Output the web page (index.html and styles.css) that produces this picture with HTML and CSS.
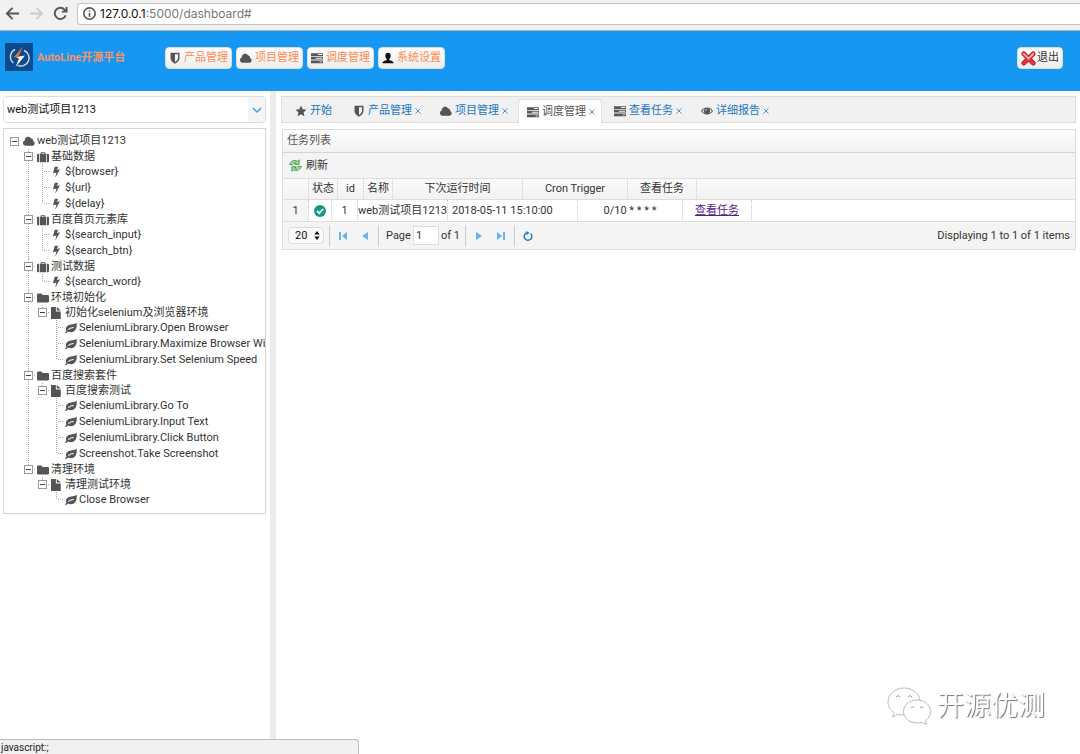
FILE: index.html
```html
<!DOCTYPE html>
<html lang="zh-CN">
<head>
<meta charset="utf-8">
<title>AutoLine开源平台</title>
<link rel="stylesheet" href="styles.css">
</head>
<body>
<svg class="sprite" aria-hidden="true">
  <symbol id="shield" viewBox="0 0 16 16"><path fill-rule="evenodd" d="M2 1h12v7c0 4-3.500 6-6 7.500C5.500 14 2 12 2 8zM8 3v10.200c2-1.200 4-2.700 4-5.200V3z"/></symbol>
  <symbol id="cloud" viewBox="0 0 16 16"><path d="M3.500 14.200a3.600 3.600 0 0 1-1.200-7A4.600 4.600 0 0 1 11 4.800a2.600 2.600 0 0 1 2.300 3.200 3.200 3.200 0 0 1-.3 6.200z"/></symbol>
  <symbol id="tasks" viewBox="0 0 16 16"><path fill-rule="evenodd" d="M0 1.500h16v3.700H0zM9.500 2.700V4H15V2.700zM0 6.400h16v3.700H0zM6.500 7.600v1.300H15V7.600zM0 11.300h16V15H0zM11.500 12.500v1.300H15v-1.300z"/></symbol>
  <symbol id="user" viewBox="0 0 16 16"><path d="M8 1c2.300 0 3.600 1.700 3.600 3.900 0 1.800-.7 3.200-1.800 4V11c2.700.6 5.700 1.300 5.700 4H.5c0-2.700 3-3.400 5.700-4V8.900c-1.100-.8-1.800-2.200-1.800-4C4.400 2.700 5.700 1 8 1z"/></symbol>
  <symbol id="star" viewBox="0 0 16 16"><path d="M8 .8l2.200 4.800 5.200.6-3.900 3.500 1.100 5.200L8 12.300l-4.600 2.600 1.100-5.200L.6 6.200l5.200-.6z"/></symbol>
  <symbol id="eye" viewBox="0 0 16 16"><path fill-rule="evenodd" d="M0 8c1.800-3 4.600-4.700 8-4.700S14.200 5 16 8c-1.800 3-4.600 4.700-8 4.700S1.800 11 0 8zm1.500 0c1 1.500 2.300 2.500 3.800 3.100A4.300 4.300 0 0 1 5 5C3.500 5.600 2.400 6.600 1.500 8zM11 5a4.300 4.300 0 0 1-.3 6.100c1.500-.6 2.800-1.600 3.800-3.100-.9-1.400-2-2.400-3.500-3zM7.900 5.200A2.300 2.300 0 0 0 5.700 7.500h1c0-.8.500-1.300 1.200-1.300z"/></symbol>
  <symbol id="case" viewBox="0 0 16 16"><path fill-rule="evenodd" d="M5 3.500V1.500h6v2h1.200V15H3.800V3.500zM6.200 3.500h3.600v-.9H6.200zM2.800 3.500V15H1.500A1.500 1.500 0 0 1 0 13.500V5a1.500 1.500 0 0 1 1.500-1.500zM13.200 3.500h1.300A1.500 1.500 0 0 1 16 5v8.500a1.500 1.500 0 0 1-1.500 1.500h-1.300z"/></symbol>
  <symbol id="bolt" viewBox="0 0 16 16"><path d="M5 1h4.500L7.800 5.300 12 4.400 5.600 15.500l1.600-7L2.500 9.600z"/></symbol>
  <symbol id="folder" viewBox="0 0 16 16"><path d="M0 3.500A1.500 1.500 0 0 1 1.500 2h4A1.500 1.500 0 0 1 7 3.500V4h7.500A1.500 1.500 0 0 1 16 5.500v7a1.500 1.500 0 0 1-1.500 1.500h-13A1.500 1.500 0 0 1 0 12.500z"/></symbol>
  <symbol id="file" viewBox="0 0 16 16"><path d="M0 0h6.500v6H13v10H0zM7.700 0L13 4.800H7.700z"/></symbol>
  <symbol id="leaf" viewBox="0 0 16 16"><path fill-rule="evenodd" d="M15.500 1C16.500 8 13.500 13.500 8 13.600c-1.800 0-3.200-.5-4.200-.9L1.200 15 0 14l1.800-2.300C0 7.500 2.800 3.600 8 3.300 11 3 13.500 2.500 15.500 1zM11.600 6.600C8.400 6.500 5.700 7.700 4 9.800l1 .9c1.700-1.800 3.800-2.700 6.600-2.800z"/></symbol>
  <symbol id="refresh" viewBox="0 0 16 16"><path fill="#a9dfa4" stroke="#2f8b3a" d="M1 7c0-4 6-6.500 9.500-4.200L12.500 1v5.500H7L9 4.800C7 4 5 4.500 4.500 7zM15 9c0 4-6 6.500-9.500 4.200L3.500 15V9.500H9l-2 1.700c2 .8 4 .3 4.500-2.200z"/></symbol>
</svg>

<div class="browser">
  <button class="nav" aria-label="后退"><svg viewBox="0 0 16 16"><path d="M15 8H2M8 2L2 8l6 6"/></svg></button>
  <button class="nav off" aria-label="前进" disabled><svg viewBox="0 0 16 16"><path d="M1 8h13M8 2l6 6-6 6"/></svg></button>
  <button class="nav" aria-label="重新加载"><svg viewBox="0 0 16 16"><path d="M13.500 10A6 6 0 1 1 12.300 3.800L14 5.500M14.500 1v5h-5"/></svg></button>
  <div class="address">
    <svg viewBox="0 0 16 16"><circle cx="8" cy="8" r="7"/><path d="M8 7v5M8 4v1.600"/></svg>
    <span><b>127.0.0.1</b>:5000/dashboard#</span>
  </div>
</div>

<header class="top">
  <svg class="logo" viewBox="0 0 28 28"><rect width="28" height="28" fill="#0b4a8c"/><path d="M10 6.500A8 8 0 0 0 8.500 20M19 7.500A8 8 0 0 1 13 22.500" fill="none" stroke="#c9d9ea" stroke-width="1.500"/><path d="M18 3.500L8.500 14.500l5-.8z" fill="#ee6a3c"/><path d="M13.500 13.700l-2.500 1 3 .6-3.500 9L20 12.500l-4.500.7z" fill="#fff"/></svg>
  <strong class="brand">AutoLine开源平台</strong>
  <nav class="menu">
    <button class="btn"><svg class="ico"><use href="#shield"/></svg>产品管理</button>
    <button class="btn"><svg class="ico"><use href="#cloud"/></svg>项目管理</button>
    <button class="btn"><svg class="ico"><use href="#tasks"/></svg>调度管理</button>
    <button class="btn"><svg class="ico black"><use href="#user"/></svg>系统设置</button>
  </nav>
  <button class="btn exit"><svg viewBox="0 0 16 16"><path d="M3 3l10 10M13 3L3 13" stroke="#b3131b" stroke-width="5" stroke-linecap="round"/><path d="M3 3l10 10M13 3L3 13" stroke="#e8323a" stroke-width="3.500" stroke-linecap="round"/><path d="M3 3l5 5 5-5" fill="none" stroke="#f9b5b8" stroke-width="1.800" stroke-linecap="round"/></svg>退出</button>
</header>

<div class="work">
  <aside class="side">
    <div class="combo">
      <input type="text" value="web测试项目1213" aria-label="项目">
      <button aria-label="展开"><svg viewBox="0 0 10 6"><path d="M1 1l4 4 4-4"/></svg></button>
    </div>
    <ul class="tree">
      <li>
        <div class="row root"><button class="fold" aria-label="折叠"></button><svg class="ico"><use href="#cloud"/></svg><span>web测试项目1213</span></div>
        <ul>
          <li>
            <div class="row"><button class="fold" aria-label="折叠"></button><svg class="ico"><use href="#case"/></svg><span>基础数据</span></div>
            <ul>
              <li class="leaf"><svg class="ico"><use href="#bolt"/></svg><span>${browser}</span></li>
              <li class="leaf"><svg class="ico"><use href="#bolt"/></svg><span>${url}</span></li>
              <li class="leaf"><svg class="ico"><use href="#bolt"/></svg><span>${delay}</span></li>
            </ul>
          </li>
          <li>
            <div class="row"><button class="fold" aria-label="折叠"></button><svg class="ico"><use href="#case"/></svg><span>百度首页元素库</span></div>
            <ul>
              <li class="leaf"><svg class="ico"><use href="#bolt"/></svg><span>${search_input}</span></li>
              <li class="leaf"><svg class="ico"><use href="#bolt"/></svg><span>${search_btn}</span></li>
            </ul>
          </li>
          <li>
            <div class="row"><button class="fold" aria-label="折叠"></button><svg class="ico"><use href="#case"/></svg><span>测试数据</span></div>
            <ul>
              <li class="leaf"><svg class="ico"><use href="#bolt"/></svg><span>${search_word}</span></li>
            </ul>
          </li>
          <li>
            <div class="row"><button class="fold" aria-label="折叠"></button><svg class="ico"><use href="#folder"/></svg><span>环境初始化</span></div>
            <ul>
              <li>
                <div class="row"><button class="fold" aria-label="折叠"></button><svg class="ico"><use href="#file"/></svg><span>初始化selenium及浏览器环境</span></div>
                <ul>
                  <li class="leaf"><svg class="ico"><use href="#leaf"/></svg><span>SeleniumLibrary.Open Browser</span></li>
                  <li class="leaf"><svg class="ico"><use href="#leaf"/></svg><span>SeleniumLibrary.Maximize Browser Window</span></li>
                  <li class="leaf"><svg class="ico"><use href="#leaf"/></svg><span>SeleniumLibrary.Set Selenium Speed</span></li>
                </ul>
              </li>
            </ul>
          </li>
          <li>
            <div class="row"><button class="fold" aria-label="折叠"></button><svg class="ico"><use href="#folder"/></svg><span>百度搜索套件</span></div>
            <ul>
              <li>
                <div class="row"><button class="fold" aria-label="折叠"></button><svg class="ico"><use href="#file"/></svg><span>百度搜索测试</span></div>
                <ul>
                  <li class="leaf"><svg class="ico"><use href="#leaf"/></svg><span>SeleniumLibrary.Go To</span></li>
                  <li class="leaf"><svg class="ico"><use href="#leaf"/></svg><span>SeleniumLibrary.Input Text</span></li>
                  <li class="leaf"><svg class="ico"><use href="#leaf"/></svg><span>SeleniumLibrary.Click Button</span></li>
                  <li class="leaf"><svg class="ico"><use href="#leaf"/></svg><span>Screenshot.Take Screenshot</span></li>
                </ul>
              </li>
            </ul>
          </li>
          <li>
            <div class="row"><button class="fold" aria-label="折叠"></button><svg class="ico"><use href="#folder"/></svg><span>清理环境</span></div>
            <ul>
              <li>
                <div class="row"><button class="fold" aria-label="折叠"></button><svg class="ico"><use href="#file"/></svg><span>清理测试环境</span></div>
                <ul>
                  <li class="leaf"><svg class="ico"><use href="#leaf"/></svg><span>Close Browser</span></li>
                </ul>
              </li>
            </ul>
          </li>
        </ul>
      </li>
    </ul>
  </aside>

  <main class="main">
    <div class="tabs">
      <div class="tab first"><a href="#"><svg class="ico"><use href="#star"/></svg>开始</a></div>
      <div class="tab"><a href="#"><svg class="ico"><use href="#shield"/></svg>产品管理</a><button class="close" aria-label="关闭"><svg viewBox="0 0 6 6"><path d="M.5.500l5 5M5.500.500l-5 5"/></svg></button></div>
      <div class="tab"><a href="#"><svg class="ico"><use href="#cloud"/></svg>项目管理</a><button class="close" aria-label="关闭"><svg viewBox="0 0 6 6"><path d="M.5.500l5 5M5.500.500l-5 5"/></svg></button></div>
      <div class="tab active"><a href="#"><svg class="ico"><use href="#tasks"/></svg>调度管理</a><button class="close" aria-label="关闭"><svg viewBox="0 0 6 6"><path d="M.5.500l5 5M5.500.500l-5 5"/></svg></button></div>
      <div class="tab"><a href="#"><svg class="ico"><use href="#tasks"/></svg>查看任务</a><button class="close" aria-label="关闭"><svg viewBox="0 0 6 6"><path d="M.5.500l5 5M5.500.500l-5 5"/></svg></button></div>
      <div class="tab"><a href="#"><svg class="ico"><use href="#eye"/></svg>详细报告</a><button class="close" aria-label="关闭"><svg viewBox="0 0 6 6"><path d="M.5.500l5 5M5.500.500l-5 5"/></svg></button></div>
    </div>

    <section class="panel">
      <h2 class="title">任务列表</h2>
      <div class="toolbar"><button class="reload"><svg class="ico"><use href="#refresh"/></svg>刷新</button></div>
      <table class="grid head">
        <colgroup><col class="w25"><col class="w29"><col class="w26"><col class="w29"><col class="w130"><col class="w105"><col class="w69"><col></colgroup>
        <thead><tr><th></th><th>状态</th><th>id</th><th>名称</th><th>下次运行时间</th><th>Cron Trigger</th><th>查看任务</th><th></th></tr></thead>
      </table>
      <table class="grid body">
        <colgroup><col class="w25"><col class="w23"><col class="w26"><col class="w90"><col class="w130"><col class="w105"><col class="w69"><col></colgroup>
        <tbody><tr>
          <td class="num">1</td>
          <td><svg class="ok" viewBox="0 0 12 12"><circle cx="6" cy="6" r="6" fill="#159a80"/><path d="M3 6l2.200 2.200L9.200 4" fill="none" stroke="#fff" stroke-width="1.800"/></svg></td>
          <td>1</td><td>web测试项目1213</td><td class="left">2018-05-11 15:10:00</td><td>0/10 * * * *</td><td><a href="#">查看任务</a></td><td></td>
        </tr></tbody>
      </table>
      <div class="pager">
        <span class="size"><select aria-label="每页条数"><option>20</option></select><svg viewBox="0 0 6 10"><path d="M0 4l3-4 3 4zM0 6l3 4 3-4z"/></svg></span>
        <i class="sep"></i>
        <button class="pg" aria-label="首页"><svg viewBox="0 0 10 10"><path d="M1 1h2v8H1zM9 1v8L4 5z"/></svg></button>
        <button class="pg" aria-label="上一页"><svg viewBox="0 0 10 10"><path d="M8 1v8L2 5z"/></svg></button>
        <i class="sep"></i>
        <label class="page">Page <input type="text" value="1"></label><span class="of">of 1</span>
        <i class="sep"></i>
        <button class="pg" aria-label="下一页"><svg viewBox="0 0 10 10"><path d="M2 1v8l6-4z"/></svg></button>
        <button class="pg" aria-label="末页"><svg viewBox="0 0 10 10"><path d="M7 1h2v8H7zM1 1v8l5-4z"/></svg></button>
        <i class="sep"></i>
        <button class="pg" aria-label="刷新"><svg viewBox="0 0 10 10"><path class="spin" d="M7.500 2.500A3.800 3.800 0 1 1 3.500 1.900"/><path class="deep" d="M3 0l3.500 1.800L3.500 4.200z"/></svg></button>
        <span class="info">Displaying 1 to 1 of 1 items</span>
      </div>
    </section>
  </main>
</div>

<div class="status">javascript:;</div>
<div class="mark">
  <svg viewBox="0 0 44 38"><g fill="#fff" stroke="#bbb"><path d="M17 1C8 1 1 7 1 15c0 4.500 2.200 8 6 10.500L5.500 30l5.500-2.800c2 .6 4 .8 6 .8 9 0 16-6 16-13.500S26 1 17 1z"/><path d="M30 13c-7.500 0-13.500 5-13.500 11.500S22.500 36 30 36c1.700 0 3.400-.2 5-.7l4.500 2.300-1-4c3-2.200 5-5.300 5-9C43.500 18 37.500 13 30 13z"/></g><path d="M9 10q2-3 4 0M21 10q2-3 4 0M24 21q1.500-2.500 3 0M33 21q1.500-2.500 3 0" fill="none" stroke="#999"/></svg>
  <span>开源优测</span>
</div>
</body>
</html>
```
FILE: styles.css
```css
* { box-sizing: border-box; }

body {
  margin: 0;
  min-height: 100vh;
  display: flex;
  flex-direction: column;
  background: #fff;
  color: #333;
  font: 11px/16px Roboto, "Noto Sans CJK SC", sans-serif;
}

button, input, select { font: inherit; color: inherit; margin: 0; }
button { border: 0; padding: 0; background: none; cursor: pointer; white-space: nowrap; }
ul { list-style: none; margin: 0; padding: 0; }

.sprite { display: none; }
.ico { width: 12px; height: 12px; fill: #555; flex: none; }
.black { fill: #111; }

/* browser chrome */
.browser {
  display: flex;
  align-items: center;
  height: 31px;
  padding: 0 0 3px 5px;
  gap: 9px;
  background: #f1f1f1;
  border-bottom: 1px solid #a9b4bb;
}
.nav { display: flex; }
.nav svg { width: 15px; height: 15px; fill: none; stroke: #555; stroke-width: 2; }
.nav.off svg { stroke: #ccc; }
.address {
  flex: 1;
  display: flex;
  align-items: center;
  gap: 4px;
  height: 22px;
  padding-left: 5px;
  border: 1px solid #c4c4c4;
  border-right: 0;
  border-radius: 3px 0 0 3px;
  background: #fff;
  color: #777;
  font-family: Inter, sans-serif;
  font-size: 12px;
}
.address svg { width: 13px; height: 13px; fill: none; stroke: #555; stroke-width: 2; }
.address b { font-weight: 400; color: #111; }

/* header */
.top {
  display: flex;
  align-items: center;
  height: 60px;
  padding: 0 17px 6px 5px;
  background: #1697f2;
}
.logo { width: 28px; height: 28px; margin-bottom: 2px; }
.brand { width: 128px; margin-left: 4px; color: #f5936a; }
.menu { display: flex; gap: 4px; }
.btn {
  display: flex;
  align-items: center;
  gap: 3px;
  height: 22px;
  padding: 0 3px;
  border-radius: 4px;
  border: 1px solid #ddd;
  background: linear-gradient(#fff, #ececec);
  color: #ff8a50;
}
.menu .btn { width: 67px; justify-content: center; }
.exit { margin-left: auto; gap: 1px; color: #333; }
.exit svg { width: 15px; height: 15px; }

/* work area */
.work { flex: 1; display: flex; }
.side {
  width: 276px;
  flex: none;
  padding: 5px 4px 0 3px;
  border-right: 6px solid #ececec;
}
.combo {
  display: flex;
  height: 27px;
  border: 1px solid #ddd;
  border-radius: 4px;
  overflow: hidden;
}
.combo input {
  flex: 1;
  min-width: 0;
  border: 0;
  outline: 0;
  padding: 0 3px;
  color: #111;
}
.combo button { display: grid; place-items: center; width: 17px; background: #f5f5f5; }
.combo svg { width: 10px; height: 6px; fill: none; stroke: #3fa3e6; stroke-width: 1.5; }

.tree {
  margin-top: 5px;
  padding: 4px 0 5px 4px;
  border: 1px solid #d4d4d4;
  overflow: hidden;
  white-space: nowrap;
}
.tree ul { padding-left: 14px; }
.tree ul li {
  background:
    repeating-linear-gradient(#aaa 0 1px, #fff 1px 2px) 6px 0 / 1px 100% no-repeat,
    repeating-linear-gradient(90deg, #aaa 0 1px, transparent 1px 2px) 6px 7px / 8px 1px no-repeat;
}
.tree ul li:last-child { background-size: 1px 8px, 8px 1px; }
.row, .leaf { display: flex; align-items: center; height: 15px; }
.row.root, .leaf { height: 16px; }
.leaf { padding-left: 14px; }
.tree .ico { margin: 0 2px 0 1px; }
.fold {
  width: 9px;
  height: 9px;
  margin: 0 3px 0 2px;
  border: 1px solid #999;
  background: linear-gradient(#444, #444) center / 5px 1px no-repeat #fff;
}

.main { flex: 1; min-width: 0; padding: 5px 4px 0 5px; }

/* tabs */
.tabs {
  display: flex;
  gap: 3px;
  height: 27px;
  padding: 2px 4px 0;
  background: #f1f1f1;
  border: 1px solid #ddd;
}
.tab {
  display: flex;
  align-items: center;
  gap: 3px;
  height: 24px;
  padding: 0 6px 0 8px;
  border: 1px solid transparent;
  border-radius: 4px 4px 0 0;
}
.tab.first { padding-right: 8px; }
.tab a { display: flex; align-items: center; gap: 3px; color: #2277c0; text-decoration: none; }
.tab.active { background: #fff; border-color: #ddd; border-bottom: 0; }
.tab.active a { color: #555; }
.close { display: flex; }
.close svg { width: 6px; height: 6px; stroke: #5c93c8; stroke-width: 1; }

/* data grid */
.panel { margin: 6px 0 0 1px; border: 1px solid #ddd; }
.title {
  margin: 0;
  height: 23px;
  padding: 0 4px;
  font-size: 11px;
  font-weight: 400;
  line-height: 22px;
  color: #555;
  background: linear-gradient(#fff, #f1f1f1);
  border-bottom: 1px solid #d4d4d4;
}
.toolbar { display: flex; height: 26px; padding-left: 6px; background: #f4f4f4; border-bottom: 1px solid #ddd; }
.reload { display: flex; align-items: center; gap: 4px; }
.reload .ico { width: 13px; height: 13px; }

.grid { width: 100%; table-layout: fixed; border-collapse: separate; border-spacing: 0; }
.grid th, .grid td {
  height: 21px;
  padding: 0;
  font-weight: 400;
  line-height: 16px;
  text-align: center;
  white-space: nowrap;
  border-right: 1px dotted #ccc;
  border-bottom: 1px solid #ddd;
}
.grid td { height: 22px; }
.grid th { background: linear-gradient(#fbfbfb, #f2f2f2); }
.grid th:last-child, .grid td:last-child { border-right: 0; }
.grid .left { text-align: left; padding-left: 4px; }
.grid .num { background: #f5f5f5; }
.grid a { color: #551a8b; }
.ok { display: block; width: 12px; height: 12px; margin: 0 auto; }
.w23 { width: 23px; }
.w25 { width: 26px; }
.w26 { width: 26px; }
.w29 { width: 29px; }
.w69 { width: 69px; }
.w90 { width: 90px; }
.w105 { width: 105px; }
.w130 { width: 130px; }

.pager {
  display: flex;
  align-items: center;
  height: 27px;
  padding: 0 5px;
  background: #f4f4f4;
}
.size { display: grid; width: 36px; align-items: center; }
.size > * { grid-area: 1 / 1; }
.size select {
  appearance: none;
  height: 17px;
  padding: 0 0 0 6px;
  border: 1px solid #ddd;
  border-radius: 4px;
  background: #fafafa;
  color: #111;
}
.size svg { width: 6px; height: 9px; margin-right: 4px; justify-self: end; fill: #111; pointer-events: none; }
.sep { width: 1px; height: 22px; margin: 0 5px; background: #ccc; }
.pg { display: flex; justify-content: center; width: 16px; }
.pg + .pg { margin-left: 6px; }
.pg svg { width: 10px; height: 10px; fill: #68b3ea; }
.pg .spin { fill: none; stroke: #1f7fc9; stroke-width: 1.5; }
.pg .deep { fill: #1f7fc9; }
.page { display: flex; align-items: center; gap: 2px; margin-left: 2px; }
.page input { width: 26px; height: 19px; padding: 0 2px; border: 1px solid #ddd; background: #fff; }
.of { margin-left: 2px; }
.info { margin-left: auto; }

/* overlays */
.status {
  position: fixed;
  left: 0;
  bottom: 0;
  width: 359px;
  height: 15px;
  padding-left: 1px;
  line-height: 15px;
  font-size: 10px;
  color: #222;
  background: #f1f1f1;
  border: 1px solid #bbb;
  border-width: 1px 1px 0 0;
  border-radius: 0 4px 0 0;
}
.mark {
  position: fixed;
  right: 35px;
  bottom: 28px;
  display: flex;
  align-items: center;
  gap: 6px;
  font-size: 27px;
  line-height: 40px;
  color: #fff;
  text-shadow: 1px 1px 1px #777;
}
.mark svg { width: 44px; height: 38px; }
```
